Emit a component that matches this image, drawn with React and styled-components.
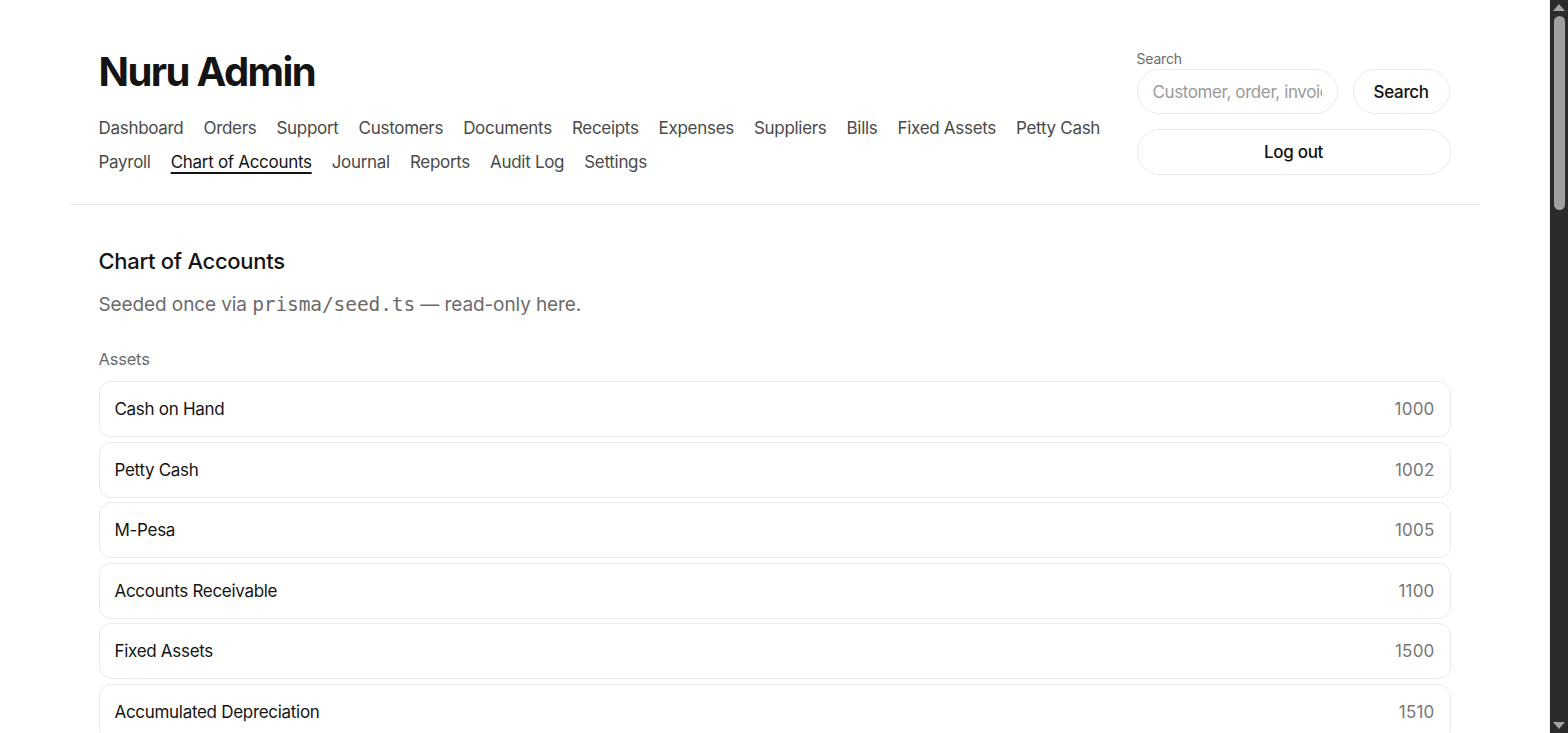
import styled, { createGlobalStyle } from 'styled-components'

const GlobalStyle = createGlobalStyle`
  html { background: #ffffff; }
  body {
    margin: 0;
    padding-right: 19px;
    background: #ffffff;
    color: #111111;
    font-family: Inter, "Noto Sans", Arial, sans-serif;
    -webkit-font-smoothing: antialiased;
  }
  * { box-sizing: border-box; }
`

const NAV = [
  'Dashboard', 'Orders', 'Support', 'Customers', 'Documents', 'Receipts',
  'Expenses', 'Suppliers', 'Bills', 'Fixed Assets', 'Petty Cash', 'Payroll',
  'Chart of Accounts', 'Journal', 'Reports', 'Audit Log', 'Settings',
]

const ASSETS = [
  { name: 'Cash on Hand', code: '1000' },
  { name: 'Petty Cash', code: '1002' },
  { name: 'M-Pesa', code: '1005' },
  { name: 'Accounts Receivable', code: '1100' },
  { name: 'Fixed Assets', code: '1500' },
  { name: 'Accumulated Depreciation', code: '1510' },
  { name: 'Inventory', code: '1200' },
  { name: 'Prepaid Expenses', code: '1300' },
]

/* dark window scrollbar pinned to the right edge */
const ScrollTrack = styled.div`
  position: fixed;
  top: 0;
  right: 0;
  bottom: 0;
  width: 19px;
  background: #2b2b2b;
  border-left: 1px solid #f2f2f2;
  display: flex;
  flex-direction: column;
  align-items: center;
  padding: 4px 0;
`

const Arrow = styled.div`
  width: 0;
  height: 0;
  border-left: 6px solid transparent;
  border-right: 6px solid transparent;
  ${p => (p.$down
    ? 'border-top: 7px solid #a3a3a3; margin-top: auto;'
    : 'border-bottom: 7px solid #a3a3a3;')}
`

const Thumb = styled.div`
  width: 11px;
  height: 194px;
  margin-top: 5px;
  border-radius: 6px;
  background: #a0a0a0;
`

const Page = styled.div`
  max-width: 1410px;
  margin: 0 auto;
`

const Header = styled.header`
  display: flex;
  justify-content: space-between;
  gap: 32px;
  padding: 46px 29px 25px;
  border-bottom: 1px solid #e8e8e8;
`

const Brand = styled.div`
  display: flex;
  flex-direction: column;
  min-width: 0;
  flex: 1;
`

const Logo = styled.h1`
  margin: 0 0 13px;
  font-size: 40px;
  line-height: 52px;
  font-weight: 700;
  letter-spacing: -1.6px;
  color: #141414;
`

const Nav = styled.nav`
  display: flex;
  flex-wrap: wrap;
  column-gap: 20px;
`

const NavLink = styled.a`
  font-size: 17px;
  line-height: 34px;
  letter-spacing: -0.3px;
  color: ${p => (p.$active ? '#141414' : '#4a4a4a')};
  text-decoration: ${p => (p.$active ? 'underline' : 'none')};
  text-underline-offset: 4px;
  text-decoration-thickness: 1.5px;
  cursor: pointer;
`

const Side = styled.div`
  width: 314px;
  flex-shrink: 0;
  display: flex;
  flex-direction: column;
  gap: 15px;
`

const SearchForm = styled.form`
  display: flex;
  flex-direction: column;
  gap: 2px;
  margin-top: 4px;
`

const Label = styled.label`
  font-size: 14px;
  line-height: 17px;
  letter-spacing: -0.2px;
  color: #6b6b6b;
`

const SearchRow = styled.div`
  display: flex;
  gap: 15px;
`

const Input = styled.input`
  width: 201px;
  height: 45px;
  padding: 0 15px;
  border: 1px solid #ebebeb;
  border-radius: 23px;
  background: #ffffff;
  font: inherit;
  font-size: 17px;
  letter-spacing: -0.4px;
  color: #111;
  outline: none;
  &::placeholder { color: #9a9a9a; }
`

const Pill = styled.button`
  flex: none;
  width: ${p => (p.$wide ? '100%' : 'auto')};
  height: ${p => (p.$wide ? '46px' : '45px')};
  padding: 0 20px;
  border: 1px solid #ebebeb;
  border-radius: 23px;
  background: #ffffff;
  color: #111;
  font: inherit;
  font-size: 17px;
  font-weight: 500;
  letter-spacing: -0.3px;
  cursor: pointer;
`

const Main = styled.main`
  padding: 40px 29px 40px;
`

const Title = styled.h2`
  margin: 0;
  font-size: 22px;
  line-height: 32px;
  font-weight: 500;
  letter-spacing: -0.3px;
  color: #141414;
`

const Lead = styled.p`
  margin: 14px 0 0;
  font-size: 19px;
  line-height: 28px;
  letter-spacing: -0.1px;
  color: #6b6b6b;
`

const Code = styled.code`
  font-family: "DejaVu Sans Mono", "Liberation Mono", monospace;
  font-size: 19.5px;
  letter-spacing: -0.1px;
`

const Group = styled.section`
  margin-top: 29px;
`

const GroupTitle = styled.h3`
  margin: 0 0 11px;
  font-size: 16.5px;
  line-height: 22px;
  font-weight: 400;
  letter-spacing: -0.2px;
  color: #6b6b6b;
`

const List = styled.ul`
  list-style: none;
  margin: 0;
  padding: 0;
  display: flex;
  flex-direction: column;
  gap: 4.5px;
`

const Row = styled.li`
  display: flex;
  align-items: center;
  justify-content: space-between;
  height: 56px;
  padding: 0 15px;
  border: 1px solid #ebebeb;
  border-radius: 12px;
  font-size: 17px;
  letter-spacing: -0.3px;
  color: #141414;
`

const Num = styled.span`
  color: #777777;
  letter-spacing: 0.2px;
`

export default function App() {
  return (
    <>
      <GlobalStyle />
      <Page>
        <Header>
          <Brand>
            <Logo>Nuru Admin</Logo>
            <Nav>
              {NAV.map(item => (
                <NavLink key={item} $active={item === 'Chart of Accounts'}>{item}</NavLink>
              ))}
            </Nav>
          </Brand>
          <Side>
            <SearchForm onSubmit={e => e.preventDefault()}>
              <Label htmlFor="q">Search</Label>
              <SearchRow>
                <Input id="q" placeholder="Customer, order, invoice…" />
                <Pill type="submit">Search</Pill>
              </SearchRow>
            </SearchForm>
            <Pill $wide>Log out</Pill>
          </Side>
        </Header>

        <Main>
          <Title>Chart of Accounts</Title>
          <Lead>Seeded once via <Code>prisma/seed.ts</Code> — read-only here.</Lead>
          <Group>
            <GroupTitle>Assets</GroupTitle>
            <List>
              {ASSETS.map(a => (
                <Row key={a.code}>
                  <span>{a.name}</span>
                  <Num>{a.code}</Num>
                </Row>
              ))}
            </List>
          </Group>
        </Main>
      </Page>
      <ScrollTrack>
        <Arrow />
        <Thumb />
        <Arrow $down />
      </ScrollTrack>
    </>
  )
}
